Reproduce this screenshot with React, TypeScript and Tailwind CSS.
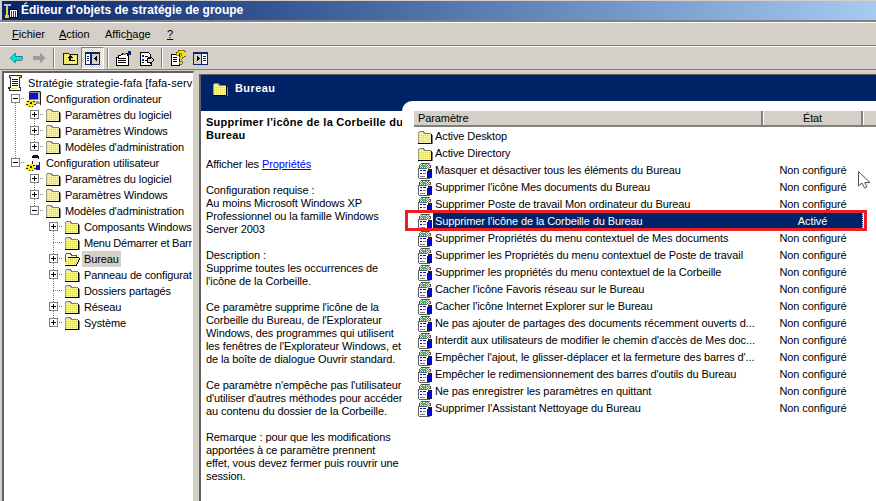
import type { ReactNode } from "react"

const rows = [
  { name: "Masquer et désactiver tous les éléments du Bureau", state: "Non configuré" },
  { name: "Supprimer l'icône Mes documents du Bureau", state: "Non configuré" },
  { name: "Supprimer Poste de travail Mon ordinateur du Bureau", state: "Non configuré" },
  { name: "Supprimer l'icône de la Corbeille du Bureau", state: "Activé", selected: true },
  { name: "Supprimer Propriétés du menu contextuel de Mes documents", state: "Non configuré" },
  { name: "Supprimer les Propriétés du menu contextuel de Poste de travail", state: "Non configuré" },
  { name: "Supprimer les propriétés du menu contextuel de la Corbeille", state: "Non configuré" },
  { name: "Cacher l'icône Favoris réseau sur le Bureau", state: "Non configuré" },
  { name: "Cacher l'icône Internet Explorer sur le Bureau", state: "Non configuré" },
  { name: "Ne pas ajouter de partages des documents récemment ouverts d...", state: "Non configuré" },
  { name: "Interdit aux utilisateurs de modifier le chemin d'accès de Mes doc...", state: "Non configuré" },
  { name: "Empêcher l'ajout, le glisser-déplacer et la fermeture des barres d'...", state: "Non configuré" },
  { name: "Empêcher le redimensionnement des barres d'outils du Bureau", state: "Non configuré" },
  { name: "Ne pas enregistrer les paramètres en quittant", state: "Non configuré" },
  { name: "Supprimer l'Assistant Nettoyage du Bureau", state: "Non configuré" },
]

function PatternDefs() {
  return (
    <svg className="absolute w-0 h-0">
      <defs>
        <pattern id="dither" width="2" height="2" patternUnits="userSpaceOnUse">
          <rect width="2" height="2" fill="#f4ee70" />
          <rect width="1" height="1" fill="#d8d49c" />
          <rect x="1" y="1" width="1" height="1" fill="#fffbb0" />
        </pattern>
        <pattern id="greyDither" width="2" height="2" patternUnits="userSpaceOnUse">
          <rect width="2" height="2" fill="#e8e8e8" />
          <rect width="1" height="1" fill="#707070" />
          <rect x="1" y="1" width="1" height="1" fill="#909090" />
        </pattern>
      </defs>
    </svg>
  )
}

function Folder() {
  return (
    <svg width="16" height="16" viewBox="0 0 16 16" shapeRendering="crispEdges" className="shrink-0">
      <path d="M1 3h1V2h5v1h1v1h6v1H1z" fill="#e8e4c0" />
      <path d="M2 2h5v1h1v1h6v1h-1V5H7V4H6V3H2v1H1V3h1z" fill="#808060" />
      <rect x="1" y="5" width="13" height="9" fill="url(#dither)" />
      <rect x="1" y="4" width="1" height="10" fill="#a0a080" />
      <rect x="1" y="14" width="14" height="1" fill="#000" />
      <rect x="14" y="5" width="1" height="10" fill="#000" />
      <rect x="15" y="6" width="1" height="9" fill="#808080" />
    </svg>
  )
}

function OpenFolder() {
  return (
    <svg width="16" height="16" viewBox="0 0 16 16" shapeRendering="crispEdges" className="shrink-0">
      <path d="M1 3h1V2h5v1h1v1h5v3H4L1 12z" fill="#fffde0" />
      <path d="M2 2h5v1h1v1h5v3h-1V5H7V4H6V3H2v1H1V3h1zM1 4h1v7H1z" fill="#606040" />
      <path d="M4 7h11v1l-3 6H1v-2z" fill="url(#dither)" />
      <path d="M4 6h11v1H4zM1 14h12v1H1zM12 13h1v1h-1zM13 11h1v2h-1zM14 9h1v2h-1zM15 7h1v2h-1z" fill="#000" />
    </svg>
  )
}

function PolicyIcon() {
  return (
    <svg width="16" height="16" viewBox="0 0 16 16" shapeRendering="crispEdges" className="shrink-0">
      <rect x="3" y="0" width="10" height="6" fill="url(#greyDither)" />
      <path d="M4 0h8v1H4zM2 2h1v3H2zM13 2h1v3h-1z" fill="#505050" />
      <rect x="5" y="1" width="4" height="3" fill="#30c060" />
      <rect x="6" y="1" width="2" height="1" fill="#e0ffe0" />
      <rect x="2" y="6" width="9" height="9" fill="#fff" />
      <rect x="1" y="5" width="1" height="10" fill="#606060" />
      <rect x="2" y="5" width="8" height="1" fill="#606060" />
      <rect x="2" y="15" width="11" height="1" fill="#606060" />
      <rect x="3" y="7" width="2" height="1" fill="#0000d0" />
      <rect x="6" y="7" width="3" height="1" fill="#0000d0" />
      <rect x="3" y="10" width="2" height="1" fill="#0000d0" />
      <rect x="6" y="10" width="3" height="1" fill="#808080" />
      <rect x="3" y="13" width="5" height="1" fill="#808080" />
      <rect x="10" y="8" width="5" height="6" fill="#0000e0" />
      <rect x="11" y="6" width="4" height="2" fill="#202020" />
      <rect x="10" y="14" width="5" height="1" fill="#202020" />
    </svg>
  )
}

function ScrollIcon() {
  return (
    <svg width="16" height="16" viewBox="0 0 16 16" shapeRendering="crispEdges" className="shrink-0">
      <path d="M3.500 0.500H14.500V2.500H12.500V12.500H13.500V15.500H2.500V13.500H1.500V12.500H3.500V2.500H2.500V0.500z" fill="#fff" stroke="#303030" />
      <rect x="5" y="4" width="6" height="1" fill="#0000e0" />
      <rect x="5" y="6" width="6" height="1" fill="#0000e0" />
      <rect x="5" y="8" width="6" height="1" fill="#0000e0" />
      <rect x="5" y="10" width="6" height="1" fill="#0000e0" />
      <rect x="10" y="1" width="4" height="1" fill="#f0e040" />
      <rect x="4" y="13" width="6" height="1" fill="#f0e040" />
    </svg>
  )
}

function Gear() {
  return (
    <g>
      <rect x="0" y="10" width="10" height="5" fill="#f4e820" />
      <rect x="2" y="9" width="6" height="7" fill="#f4e820" />
      <path d="M1 10h2v1H1zM7 10h2v1H7zM4 11h2v2H4zM0 13h2v1H0zM3 15h1v1H3zM6 15h1v1H6zM8 13h2v1H8z" fill="#202020" />
    </g>
  )
}

function ComputerIcon() {
  return (
    <svg width="16" height="16" viewBox="0 0 16 16" shapeRendering="crispEdges" className="shrink-0">
      <rect x="3" y="0" width="12" height="13" fill="#909090" />
      <rect x="4" y="0" width="10" height="1" fill="#202020" />
      <rect x="4" y="2" width="8" height="6" fill="#1010c0" />
      <rect x="3" y="1" width="1" height="8" fill="#202020" />
      <rect x="14" y="1" width="1" height="13" fill="#202020" />
      <rect x="12" y="2" width="2" height="10" fill="#c0c0c0" />
      <rect x="5" y="9" width="9" height="1" fill="#fff" />
      <Gear />
    </svg>
  )
}

function UserIcon() {
  return (
    <svg width="16" height="16" viewBox="0 0 16 16" shapeRendering="crispEdges" className="shrink-0">
      <path d="M7 0h5v1h1v3h-1v2H8V3H6V1h1z" fill="#101010" />
      <rect x="8" y="3" width="4" height="3" fill="#f0f0f0" />
      <path d="M7 6h6v1h1v7h-3v2H7z" fill="#f4f4f4" />
      <path d="M6 6h1v8H6zM13 7h1v6h-1z" fill="#202020" />
      <rect x="10" y="10" width="4" height="5" fill="#1010d0" />
      <Gear />
    </svg>
  )
}

// dotted connectors plus the +/- box, one cell per tree level
function Glue({ up, down, stub, box }: { up?: boolean; down?: boolean; stub?: boolean; box?: "+" | "-" }) {
  return (
    <svg width="19" height="16" viewBox="0 0 19 16" shapeRendering="crispEdges" className="shrink-0">
      {up && <path d="M9.500 0V8" stroke="#808080" strokeDasharray="1 1" />}
      {down && <path d="M9.500 8V16" stroke="#808080" strokeDasharray="1 1" />}
      {stub && <path d="M9 7.500H20" stroke="#808080" strokeDasharray="1 1" />}
      {box && <rect x="5.500" y="3.500" width="8" height="8" fill="#fff" stroke="#808080" />}
      {box && <path d="M7 7.500H12" stroke="#000" />}
      {box === "+" && <path d="M9.500 5V10" stroke="#000" />}
    </svg>
  )
}

function TreeRow({ guides, glue, icon, label, active, labelClass }: {
  guides?: boolean[]
  glue?: { up?: boolean; down?: boolean; box?: "+" | "-" }
  icon: ReactNode
  label: string
  active?: boolean
  labelClass?: string
}) {
  return (
    <div className="flex items-center h-4 pl-[2px] whitespace-nowrap">
      {guides?.map((g, i) => <Glue key={i} up={g} down={g} />)}
      {glue && <Glue stub {...glue} />}
      {!glue && <span className="w-[1px]" />}
      <span className="flex ml-[1px]">{icon}</span>
      <span className={active ? "ml-[2px] px-[2px] h-4 leading-4 bg-[#d4d0c8]" : `ml-[2px] px-[2px] h-4 leading-4 ${labelClass ?? ""}`}>{label}</span>
    </div>
  )
}

function Tree() {
  return (
    <div className="pt-[2px] text-[11px] text-black tracking-[-0.1px]">
      <TreeRow icon={<ScrollIcon />} label="Stratégie strategie-fafa [fafa-serv" labelClass="ml-[3px] tracking-[0.12px]" />
      <TreeRow glue={{ down: true, box: "-" }} icon={<ComputerIcon />} label="Configuration ordinateur" />
      <TreeRow guides={[true]} glue={{ down: true, box: "+" }} icon={<Folder />} label="Paramètres du logiciel" />
      <TreeRow guides={[true]} glue={{ up: true, down: true, box: "+" }} icon={<Folder />} label="Paramètres Windows" />
      <TreeRow guides={[true]} glue={{ up: true, box: "+" }} icon={<Folder />} label="Modèles d'administration" />
      <TreeRow glue={{ up: true, box: "-" }} icon={<UserIcon />} label="Configuration utilisateur" />
      <TreeRow guides={[false]} glue={{ down: true, box: "+" }} icon={<Folder />} label="Paramètres du logiciel" />
      <TreeRow guides={[false]} glue={{ up: true, down: true, box: "+" }} icon={<Folder />} label="Paramètres Windows" />
      <TreeRow guides={[false]} glue={{ up: true, box: "-" }} icon={<Folder />} label="Modèles d'administration" />
      <TreeRow guides={[false, false]} glue={{ down: true, box: "+" }} icon={<Folder />} label="Composants Windows" />
      <TreeRow guides={[false, false]} glue={{ up: true, down: true }} icon={<Folder />} label="Menu Démarrer et Barr" labelClass="tracking-[-0.25px]" />
      <TreeRow guides={[false, false]} glue={{ up: true, down: true, box: "+" }} icon={<OpenFolder />} label="Bureau" active />
      <TreeRow guides={[false, false]} glue={{ up: true, down: true, box: "+" }} icon={<Folder />} label="Panneau de configurat" labelClass="tracking-[-0.15px]" />
      <TreeRow guides={[false, false]} glue={{ up: true, down: true }} icon={<Folder />} label="Dossiers partagés" />
      <TreeRow guides={[false, false]} glue={{ up: true, down: true, box: "+" }} icon={<Folder />} label="Réseau" />
      <TreeRow guides={[false, false]} glue={{ up: true, box: "+" }} icon={<Folder />} label="Système" />
    </div>
  )
}

function Toolbar() {
  const sep = <span className="mx-[3px] w-[2px] h-[20px] border-l border-r border-l-[#808080] border-r-white" />
  const cell = "w-[23px] h-[22px] flex items-center justify-center"
  return (
    <div className="flex items-center h-[24px] pl-[4px] border-t border-t-white border-b border-b-[#808080]">
      <span className={cell}>
        <svg width="14" height="12" viewBox="0 0 14 12" shapeRendering="crispEdges">
          <path d="M6 1v3h7v4H6v3L1 6z" fill="#00e0e0" stroke="#006060" strokeWidth="0.6" />
        </svg>
      </span>
      <span className={cell}>
        <svg width="14" height="12" viewBox="0 0 14 12" shapeRendering="crispEdges">
          <path d="M8 1v3H1v4h7v3l5-5z" fill="#9c9c9c" />
        </svg>
      </span>
      {sep}
      <span className={cell}>
        <svg width="16" height="14" viewBox="0 0 16 14" shapeRendering="crispEdges">
          <path d="M1 2h5l1 1h8v10H1z" fill="url(#dither)" stroke="#202020" strokeWidth="1" />
          <path d="M8 4L5 7h2v3h6V9H9V7h2z" fill="#000" />
        </svg>
      </span>
      <span className="w-[23px] h-[22px] flex items-center justify-center border border-t-[#808080] border-l-[#808080] border-r-white border-b-white bg-[repeating-conic-gradient(#fff_0_25%,#d4d0c8_0_50%)] bg-[length:2px_2px]">
        <svg width="15" height="13" viewBox="0 0 15 13" shapeRendering="crispEdges">
          <rect width="15" height="13" fill="#0a246a" />
          <rect x="1" y="2" width="4" height="10" fill="#fff" />
          <rect x="7" y="2" width="7" height="10" fill="#d4d0c8" />
          <path d="M2 4h2v1H2zM2 6h2v1H2zM2 8h2v1H2z" fill="#0a246a" />
          <rect x="6" y="0" width="1" height="13" fill="#0a246a" />
          <path d="M12 3v7L9 6.500z" fill="#000" />
        </svg>
      </span>
      {sep}
      <span className={cell}>
        <svg width="17" height="15" viewBox="0 0 17 15" shapeRendering="crispEdges">
          <path d="M1 6h2V4h3L9 2h3v2h1v10H1z" fill="#fff" stroke="#000" strokeWidth="1" />
          <path d="M3 7h8v1H3zM3 9h8v1H3zM3 11h8v1H3z" fill="#000" />
          <path d="M8 2h3v2H8z" fill="#808080" />
          <rect x="13" y="0" width="3" height="4" fill="#0a246a" />
        </svg>
      </span>
      <span className={cell}>
        <svg width="15" height="15" viewBox="0 0 15 15" shapeRendering="crispEdges">
          <path d="M1 1h8l2 2v3H9l3 0v8H1z" fill="#fff" stroke="#000" strokeWidth="1" />
          <path d="M3 4h2v2H3zM3 8h2v2H3z" fill="#1020a0" />
          <path d="M6 5h3v1H6zM6 9h2v1H6zM3 11h2v1H3z" fill="#000" />
          <path d="M8 7h3V5l4 4-4 4v-2H8z" fill="#d4d0c8" stroke="#000" strokeWidth="1" />
        </svg>
      </span>
      {sep}
      <span className={cell}>
        <svg width="16" height="16" viewBox="0 0 16 16" shapeRendering="crispEdges">
          <path d="M1 4h8v11H1z" fill="#fff" stroke="#000" strokeWidth="1" />
          <path d="M3 7h4v1H3zM3 9h4v1H3zM3 11h4v1H3z" fill="#000" />
          <path d="M6 2h2V0h6v1h2v5h-2v1h-2v2H9V6h2V3H9v2H6zM9 11h3v3H9z" fill="#f8e000" stroke="#202000" strokeWidth="0.5" />
        </svg>
      </span>
      <span className={cell}>
        <svg width="15" height="13" viewBox="0 0 15 13" shapeRendering="crispEdges">
          <rect width="15" height="13" fill="#0a246a" />
          <rect x="1" y="2" width="7" height="10" fill="#d4d0c8" />
          <rect x="9" y="2" width="5" height="10" fill="#fff" />
          <path d="M4 3v7L7 6.500z" fill="#000" />
          <path d="M10 4h3v1h-3zM10 6h3v1h-3zM10 8h3v1h-3z" fill="#0a246a" />
        </svg>
      </span>
    </div>
  )
}

function Lines({ lines, className }: { lines: string[]; className?: string }) {
  return (
    <p className={className ?? "mb-[13px]"}>
      {lines.map((l) => <span key={l} className="block">{l}</span>)}
    </p>
  )
}

export default function App() {
  return (
    <div className="relative w-[876px] h-[501px] overflow-hidden flex flex-col bg-[#d4d0c8] text-[11px] leading-[13px] text-black font-['Liberation_Sans',sans-serif]">
      <PatternDefs />
      {/* title bar */}
      <div className="pl-[2px] pt-[1px] h-[22px] border-b-2 border-b-[#808080] bg-[#d4d0c8] shrink-0">
        <div className="h-[19px] flex items-center gap-[2px] bg-gradient-to-r from-[#0a246a] to-[#a6caf0] text-white font-bold text-[12px]">
          <svg width="16" height="16" viewBox="0 0 16 16" shapeRendering="crispEdges" className="ml-[1px] shrink-0">
            <path d="M1 1h7v2H5v2H3V3H1z" fill="#c0c0c0" />
            <rect x="3" y="5" width="2" height="7" fill="#f0d020" />
            <rect x="6" y="6" width="9" height="9" fill="#fff" />
            <path d="M6 6h9v1H6zM6 14h9v1H6zM6 6h1v9H6zM14 6h1v9h-1z" fill="#000" />
            <path d="M8 8h1v6H8zM10 8h1v6h-1zM12 8h1v6h-1z" fill="#a00040" />
            <rect x="2" y="12" width="4" height="3" fill="#f0d020" />
          </svg>
          <span>Éditeur d'objets de stratégie de groupe</span>
        </div>
      </div>
      {/* menu */}
      <div className="h-[24px] shrink-0 flex items-center border-t border-t-white border-b border-b-[#808080] pl-[12px]">
        <span className="w-[47px]"><u>F</u>ichier</span>
        <span className="w-[46px]"><u>A</u>ction</span>
        <span className="w-[62px]">Affic<u>h</u>age</span>
        <span><u>?</u></span>
      </div>
      <Toolbar />
      {/* main */}
      <div className="flex-1 flex min-h-0 pt-[1px] pl-[2px]">
        <div className="w-[192px] shrink-0 bg-white border-l-2 border-t-2 border-l-[#606060] border-t-[#606060] border-r border-r-[#d4d0c8] overflow-hidden">
          <Tree />
        </div>
        <div className="w-[5px] shrink-0" />
        <div className="flex-1 min-w-0 mt-[3px] flex flex-col bg-[#002266] border-l-2 border-t border-l-[#606060] border-t-[#606060]">
          <div className="h-[26px] shrink-0 flex items-center gap-[7px] pl-[11px] text-white font-bold pt-[1px] tracking-[0.4px]">
            <Folder />
            <span>Bureau</span>
          </div>
          <div className="flex-1 flex min-h-0">
            <div className="w-[201px] shrink-0 flex flex-col">
              <div className="h-[10px] shrink-0" />
              <div className="flex-1 bg-white pl-[5px] pt-[5px] whitespace-nowrap tracking-[-0.1px]">
                <Lines className="font-bold mb-[16px] tracking-[0.28px]" lines={["Supprimer l'icône de la Corbeille du", "Bureau"]} />
                <p className="mb-[13px]">Afficher les <span className="text-[#0000ff] underline">Propriétés</span></p>
                <Lines lines={["Configuration requise :", "Au moins Microsoft Windows XP", "Professionnel ou la famille Windows", "Server 2003"]} />
                <Lines lines={["Description :", "Supprime toutes les occurrences de", "l'icône de la Corbeille."]} />
                <Lines lines={["Ce paramètre supprime l'icône de la", "Corbeille du Bureau, de l'Explorateur", "Windows, des programmes qui utilisent", "les fenêtres de l'Explorateur Windows, et", "de la boîte de dialogue Ouvrir standard."]} />
                <Lines lines={["Ce paramètre n'empêche pas l'utilisateur", "d'utiliser d'autres méthodes pour accéder", "au contenu du dossier de la Corbeille."]} />
                <Lines lines={["Remarque : pour que les modifications", "apportées à ce paramètre prennent", "effet, vous devez fermer puis rouvrir une", "session."]} />
              </div>
            </div>
            <div className="flex-1 min-w-0 bg-white rounded-tl-[10px] pt-[10px] pl-[12px] tracking-[-0.1px]">
              <div className="flex h-[16px] bg-[#d4d0c8] border-b-2 border-b-[#808080]">
                <span className="w-[349px] pl-[4px] leading-[14px] border-r-2 border-r-[#808080]">Paramètre</span>
                <span className="w-[100px] text-center leading-[14px] border-l border-l-white border-r-2 border-r-[#808080]">État</span>
                <span className="flex-1 border-l border-l-white" />
              </div>
              <div className="mt-[1px]">
                <div className="flex items-center h-[17px] pl-[3px] gap-[2px]"><Folder /><span>Active Desktop</span></div>
                <div className="flex items-center h-[17px] pl-[3px] gap-[2px]"><Folder /><span>Active Directory</span></div>
                {rows.map((r) => (
                  <div key={r.name} className="flex items-center h-[17px] pl-[3px] whitespace-nowrap">
                    <PolicyIcon />
                    {r.selected ? (
                      <div className="flex flex-1 mr-[13px] h-[17px] leading-[17px] bg-[#002266] text-white border-r border-dotted border-r-[#f0e890]">
                        <span className="w-[330px] pl-[2px]">{r.name}</span>
                        <span className="flex-1 text-center">{r.state}</span>
                      </div>
                    ) : (
                      <div className="flex flex-1 mr-[13px]">
                        <span className="w-[330px] pl-[2px] overflow-hidden">{r.name}</span>
                        <span className="flex-1 text-center">{r.state}</span>
                      </div>
                    )}
                  </div>
                ))}
              </div>
            </div>
          </div>
        </div>
      </div>
      {/* red annotation */}
      <div className="absolute left-[405px] top-[210px] w-[462px] h-[21px] border-[3px] border-[#ee1c25]" />
      {/* mouse pointer */}
      <svg width="15" height="20" viewBox="0 0 15 20" className="absolute left-[857px] top-[170px]">
        <path d="M1.500 1.500V16L5 13l2.500 5 2.500-1-2.200-4.500H13z" fill="#fff" stroke="#50505c" strokeWidth="1" />
      </svg>
    </div>
  )
}
